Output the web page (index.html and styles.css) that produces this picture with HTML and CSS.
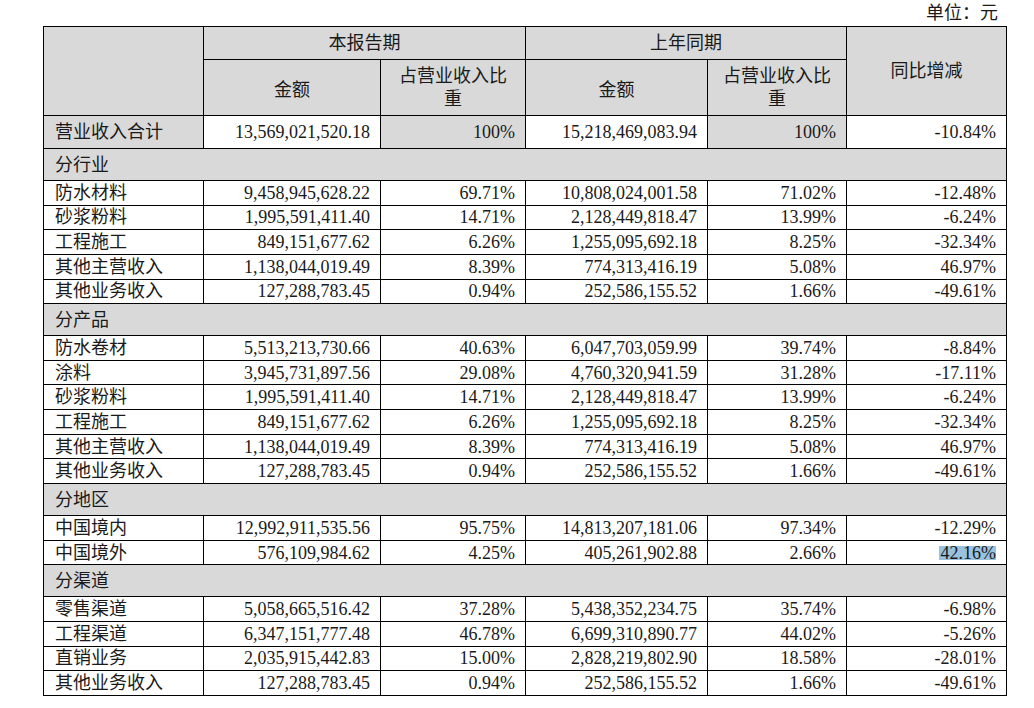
FILE: index.html
```html
<!DOCTYPE html>
<html lang="zh-CN">
<head>
<meta charset="utf-8">
<title>营业收入构成</title>
<link rel="stylesheet" href="styles.css">
</head>
<body>
<div class="unit">单位：元</div>
<table class="report">
  <colgroup>
    <col class="c-label">
    <col class="c-amt1">
    <col class="c-pct1">
    <col class="c-amt2">
    <col class="c-pct2">
    <col class="c-chg">
  </colgroup>
  <thead>
    <tr class="h1">
      <th rowspan="2" class="blank"></th>
      <th colspan="2">本报告期</th>
      <th colspan="2">上年同期</th>
      <th rowspan="2" class="chg-head">同比增减</th>
    </tr>
    <tr class="h2">
      <th class="amt-head">金额</th>
      <th>占营业收入比<br>重</th>
      <th class="amt-head">金额</th>
      <th>占营业收入比<br>重</th>
    </tr>
  </thead>
  <tbody>
    <tr class="total">
      <td class="label grey">营业收入合计</td>
      <td class="num">13,569,021,520.18</td>
      <td class="num grey">100%</td>
      <td class="num">15,218,469,083.94</td>
      <td class="num grey">100%</td>
      <td class="num">-10.84%</td>
    </tr>
    <tr class="sec"><td colspan="6" class="label grey">分行业</td></tr>
    <tr class="row"><td class="label">防水材料</td><td class="num">9,458,945,628.22</td><td class="num">69.71%</td><td class="num">10,808,024,001.58</td><td class="num">71.02%</td><td class="num">-12.48%</td></tr>
    <tr class="row"><td class="label">砂浆粉料</td><td class="num">1,995,591,411.40</td><td class="num">14.71%</td><td class="num">2,128,449,818.47</td><td class="num">13.99%</td><td class="num">-6.24%</td></tr>
    <tr class="row"><td class="label">工程施工</td><td class="num">849,151,677.62</td><td class="num">6.26%</td><td class="num">1,255,095,692.18</td><td class="num">8.25%</td><td class="num">-32.34%</td></tr>
    <tr class="row"><td class="label">其他主营收入</td><td class="num">1,138,044,019.49</td><td class="num">8.39%</td><td class="num">774,313,416.19</td><td class="num">5.08%</td><td class="num">46.97%</td></tr>
    <tr class="row"><td class="label">其他业务收入</td><td class="num">127,288,783.45</td><td class="num">0.94%</td><td class="num">252,586,155.52</td><td class="num">1.66%</td><td class="num">-49.61%</td></tr>
    <tr class="sec"><td colspan="6" class="label grey">分产品</td></tr>
    <tr class="row"><td class="label">防水卷材</td><td class="num">5,513,213,730.66</td><td class="num">40.63%</td><td class="num">6,047,703,059.99</td><td class="num">39.74%</td><td class="num">-8.84%</td></tr>
    <tr class="row"><td class="label">涂料</td><td class="num">3,945,731,897.56</td><td class="num">29.08%</td><td class="num">4,760,320,941.59</td><td class="num">31.28%</td><td class="num">-17.11%</td></tr>
    <tr class="row"><td class="label">砂浆粉料</td><td class="num">1,995,591,411.40</td><td class="num">14.71%</td><td class="num">2,128,449,818.47</td><td class="num">13.99%</td><td class="num">-6.24%</td></tr>
    <tr class="row"><td class="label">工程施工</td><td class="num">849,151,677.62</td><td class="num">6.26%</td><td class="num">1,255,095,692.18</td><td class="num">8.25%</td><td class="num">-32.34%</td></tr>
    <tr class="row"><td class="label">其他主营收入</td><td class="num">1,138,044,019.49</td><td class="num">8.39%</td><td class="num">774,313,416.19</td><td class="num">5.08%</td><td class="num">46.97%</td></tr>
    <tr class="row"><td class="label">其他业务收入</td><td class="num">127,288,783.45</td><td class="num">0.94%</td><td class="num">252,586,155.52</td><td class="num">1.66%</td><td class="num">-49.61%</td></tr>
    <tr class="sec"><td colspan="6" class="label grey">分地区</td></tr>
    <tr class="row"><td class="label">中国境内</td><td class="num">12,992,911,535.56</td><td class="num">95.75%</td><td class="num">14,813,207,181.06</td><td class="num">97.34%</td><td class="num">-12.29%</td></tr>
    <tr class="row"><td class="label">中国境外</td><td class="num">576,109,984.62</td><td class="num">4.25%</td><td class="num">405,261,902.88</td><td class="num">2.66%</td><td class="num"><span class="hl">42.16%</span></td></tr>
    <tr class="sec"><td colspan="6" class="label grey">分渠道</td></tr>
    <tr class="row"><td class="label">零售渠道</td><td class="num">5,058,665,516.42</td><td class="num">37.28%</td><td class="num">5,438,352,234.75</td><td class="num">35.74%</td><td class="num">-6.98%</td></tr>
    <tr class="row"><td class="label">工程渠道</td><td class="num">6,347,151,777.48</td><td class="num">46.78%</td><td class="num">6,699,310,890.77</td><td class="num">44.02%</td><td class="num">-5.26%</td></tr>
    <tr class="row"><td class="label">直销业务</td><td class="num">2,035,915,442.83</td><td class="num">15.00%</td><td class="num">2,828,219,802.90</td><td class="num">18.58%</td><td class="num">-28.01%</td></tr>
    <tr class="row"><td class="label">其他业务收入</td><td class="num">127,288,783.45</td><td class="num">0.94%</td><td class="num">252,586,155.52</td><td class="num">1.66%</td><td class="num">-49.61%</td></tr>
  </tbody>
</table>
</body>
</html>
```

FILE: styles.css
```css
html, body {
  margin: 0;
  padding: 0;
  background: #ffffff;
}

body {
  font-family: "Liberation Serif", "Noto Sans CJK SC", serif;
  font-size: 18px;
  color: #1a1a1a;
}

.unit {
  height: 26px;
  line-height: 26px;
  text-align: right;
  padding-right: 36px;
  box-sizing: border-box;
  width: 1034px;
}

.report {
  margin-left: 43px;
  border-collapse: collapse;
  table-layout: fixed;
  width: 964px;
}

.c-label { width: 160px; }
.c-amt1 { width: 177px; }
.c-pct1 { width: 145px; }
.c-amt2 { width: 182px; }
.c-pct2 { width: 139px; }
.c-chg { width: 160px; }

.report th,
.report td {
  border: 1px solid #000;
  padding: 0;
  line-height: 20px;
  white-space: nowrap;
}

.report th {
  background: #d9d9d9;
  font-weight: normal;
  text-align: center;
  vertical-align: middle;
  line-height: 23px;
}

.report th.amt-head {
  padding-top: 5px;
}

.report th.chg-head {
  vertical-align: top;
  padding-top: 33px;
}

.h1 { height: 33px; }
.h2 { height: 56px; }
.total { height: 33px; }
.sec { height: 32px; }
.row { height: 24.65px; }

.report td.label {
  text-align: left;
  padding-left: 11px;
}

.report td.num {
  text-align: right;
  padding-right: 10px;
}

.report td.grey {
  background: #d9d9d9;
}

.hl {
  display: inline-block;
  line-height: 14px;
  background: #99c2de;
  padding-left: 2px;
}
```
